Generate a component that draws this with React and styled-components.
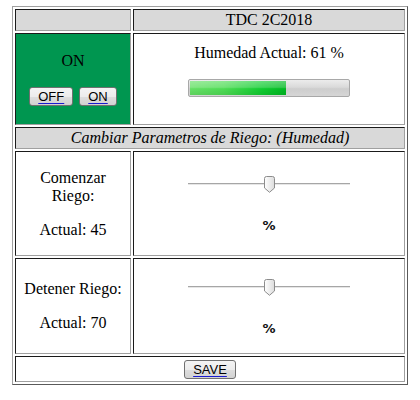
import React from 'react';
import styled, { createGlobalStyle } from 'styled-components';

const GlobalStyle = createGlobalStyle`
  body {
    margin: 0;
    background: #ffffff;
    font-family: "Liberation Serif", "Times New Roman", serif;
    font-size: 16px;
    color: #000;
  }
`;

const Page = styled.div`
  padding-top: 6px;
`;

const Board = styled.div`
  box-sizing: border-box;
  width: 396px;
  margin: 0 auto;
  display: grid;
  grid-template-columns: 116px 272px;
  grid-template-rows: 22px 92px 22px 105px 96px 26px;
  gap: 2px;
  padding: 2px;
  border: 1px solid;
  border-color: #a0a0a0 #5a5a5a #5a5a5a #a0a0a0;
`;

const Cell = styled.div`
  box-sizing: border-box;
  grid-column: ${(p) => (p.$wide ? 'span 2' : 'auto')};
  border: 1px solid;
  border-color: #1a1a1a #a0a0a0 #a0a0a0 #1a1a1a;
  background: ${(p) => p.$bg || '#ffffff'};
  display: flex;
  flex-direction: column;
  align-items: center;
  justify-content: ${(p) => (p.$top ? 'flex-start' : 'center')};
  padding-top: ${(p) => (p.$top ? '10px' : '0')};
  gap: ${(p) => p.$gap || 0}px;
  text-align: center;
  line-height: 18px;
  font-style: ${(p) => (p.$italic ? 'italic' : 'normal')};
`;

const Line = styled.div`
  line-height: 18px;
  white-space: nowrap;
`;

const ButtonRow = styled.div`
  display: flex;
  gap: 6px;
`;

const Button = styled.button`
  box-sizing: border-box;
  height: 19px;
  padding: 0 8px;
  border: 1px solid #707070;
  border-radius: 3px;
  background: linear-gradient(#f4f4f4, #ececec 50%, #dedede 50%, #d2d2d2);
  font-family: "Liberation Sans", Arial, sans-serif;
  font-size: 13px;
  line-height: 17px;
  color: #000;
  cursor: pointer;
`;

const ButtonLabel = styled.span`
  text-decoration: underline;
  text-decoration-color: #1a1ad0;
  text-underline-offset: 2px;
`;

const ProgressTrack = styled.div`
  box-sizing: border-box;
  width: 162px;
  height: 18px;
  border: 1px solid #a8a8a8;
  border-radius: 2px;
  padding: 1px;
  background: linear-gradient(#ececec, #dadada 45%, #cdcdcd 55%, #d6d6d6);
`;

const ProgressFill = styled.div`
  height: 100%;
  background:
    linear-gradient(rgba(255, 255, 255, 0.35), rgba(255, 255, 255, 0.2) 45%, rgba(0, 0, 0, 0) 55%, rgba(0, 0, 0, 0.08)),
    linear-gradient(to right, #66e066, #4fdc55 35%, #10cc30 75%, #00b822);
`;

const SliderBox = styled.div`
  position: relative;
  width: 162px;
  height: 21px;
`;

const SliderLine = styled.div`
  position: absolute;
  left: 0;
  right: 0;
  top: 9px;
  height: 1px;
  background: #a6a6a6;
  border-bottom: 1px solid #e6e6e6;
`;

const Thumb = styled.svg`
  position: absolute;
  top: 2px;
`;

const Unit = styled.div`
  font-family: "DejaVu Sans", Verdana, sans-serif;
  font-size: 13px;
  font-weight: bold;
  line-height: 15px;
  color: #111;
`;

const Slider = ({ value }) => (
  <SliderBox>
    <SliderLine />
    <Thumb width="11" height="17" viewBox="0 0 11 17" style={{ left: `${Math.round((value / 100) * 151)}px` }}>
      <defs>
        <linearGradient id="thumbFill" x1="0" y1="0" x2="1" y2="0">
          <stop offset="0" stopColor="#ffffff" />
          <stop offset="1" stopColor="#dcdcdc" />
        </linearGradient>
      </defs>
      <path
        d="M0.5 2.5 Q0.5 0.5 2.5 0.5 H8.5 Q10.5 0.5 10.5 2.5 V12 L5.5 16.3 L0.5 12 Z"
        fill="url(#thumbFill)"
        stroke="#8c8c8c"
      />
    </Thumb>
  </SliderBox>
);

const App = () => {
  const humidity = 61;

  return (
    <Page>
      <GlobalStyle />
      <Board>
        <Cell $bg="#d9d9d9" />
        <Cell $bg="#d9d9d9">TDC 2C2018</Cell>

        <Cell $bg="#009650" $gap={17}>
          <Line>ON</Line>
          <ButtonRow>
            <Button><ButtonLabel>OFF</ButtonLabel></Button>
            <Button><ButtonLabel>ON</ButtonLabel></Button>
          </ButtonRow>
        </Cell>
        <Cell $top $gap={17}>
          <Line>Humedad Actual: {humidity} %</Line>
          <ProgressTrack>
            <ProgressFill style={{ width: `${humidity}%` }} />
          </ProgressTrack>
        </Cell>

        <Cell $wide $italic $bg="#d9d9d9">Cambiar Parametros de Riego: (Humedad)</Cell>

        <Cell $gap={16}>
          <div>
            <Line>Comenzar</Line>
            <Line>Riego:</Line>
          </div>
          <Line>Actual: 45</Line>
        </Cell>
        <Cell $gap={23}>
          <Slider value={50} />
          <Unit>%</Unit>
        </Cell>

        <Cell $gap={16}>
          <Line>Detener Riego:</Line>
          <Line>Actual: 70</Line>
        </Cell>
        <Cell $gap={23}>
          <Slider value={50} />
          <Unit>%</Unit>
        </Cell>

        <Cell $wide>
          <Button><ButtonLabel>SAVE</ButtonLabel></Button>
        </Cell>
      </Board>
    </Page>
  );
};

export default App;
